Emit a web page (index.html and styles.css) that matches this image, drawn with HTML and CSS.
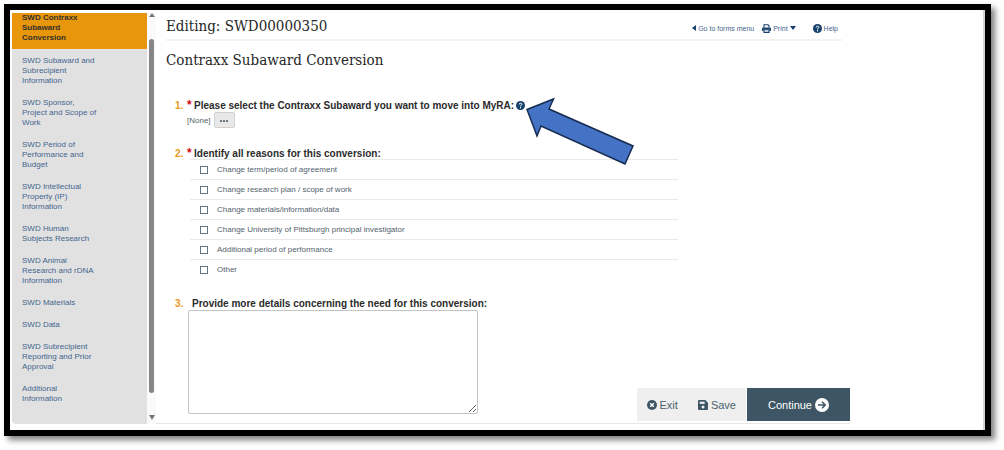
FILE: index.html
```
<!DOCTYPE html>
<html lang="en">
<head>
    <meta charset="utf-8">
    <title>Editing: SWD00000350</title>
    <link rel="stylesheet" href="styles.css">
</head>
<body>
    <div class="frame">
        <nav class="sidebar">
            <a class="active" href="#">SWD Contraxx Subaward Conversion</a>
            <a href="#">SWD Subaward and Subrecipient Information</a>
            <a href="#">SWD Sponsor, Project and Scope of Work</a>
            <a href="#">SWD Period of Performance and Budget</a>
            <a href="#">SWD Intellectual Property (IP) Information</a>
            <a href="#">SWD Human Subjects Research</a>
            <a href="#">SWD Animal Research and rDNA Information</a>
            <a href="#">SWD Materials</a>
            <a href="#">SWD Data</a>
            <a href="#">SWD Subrecipient Reporting and Prior Approval</a>
            <a href="#">Additional Information</a>
        </nav>
        <div class="scrollbar">
            <svg width="6" height="4" viewBox="0 0 6 4"><path d="M0 4L3 0L6 4z" fill="#777"/></svg>
            <div class="thumb"></div>
            <svg width="6" height="5" viewBox="0 0 6 5"><path d="M0 0H6L3 5z" fill="#777"/></svg>
        </div>

        <main class="main">
            <header class="top">
                <h1>Editing: SWD00000350</h1>
                <div class="tools">
                    <a href="#">
                        <svg width="4" height="6" viewBox="0 0 4 6"><path d="M4 0V6L0 3z" fill="#17406d"/></svg>
                        Go to forms menu
                    </a>
                    <a href="#">
                        <svg width="9" height="9" viewBox="0 0 18 18"><path d="M4 7V1.500H12L14 3.500V7" fill="none" stroke="#17406d" stroke-width="2.200"/><path d="M0 9.500Q0 7 2.500 7H15.500Q18 7 18 9.500V14H15V11H3V14H0z" fill="#17406d"/><path d="M4 11.500H14V16.800H4z" fill="#fff" stroke="#17406d" stroke-width="2.200"/></svg>
                        Print
                        <svg width="6" height="4" viewBox="0 0 6 4"><path d="M0 0H6L3 4z" fill="#17406d"/></svg>
                    </a>
                    <a class="help" href="#">
                        <svg width="9" height="9" viewBox="0 0 18 18"><circle cx="9" cy="9" r="9" fill="#17406d"/><path d="M6.300 7Q6.300 4.400 9 4.400Q11.800 4.400 11.800 6.800Q11.800 8.200 9.100 9.300V10.800" fill="none" stroke="#fff" stroke-width="2"/><circle cx="9.100" cy="13.500" r="1.300" fill="#fff"/></svg>
                        Help
                    </a>
                </div>
            </header>

            <h2>Contraxx Subaward Conversion</h2>

            <section class="question">
                <div class="title">
                    <span class="num">1.</span>
                    <span class="star">*</span>
                    <label for="pick">Please select the Contraxx Subaward you want to move into MyRA:</label>
                    <span class="hint">
                        <svg width="9" height="9" viewBox="0 0 18 18"><circle cx="9" cy="9" r="9" fill="#17406d"/><path d="M6.300 7Q6.300 4.400 9 4.400Q11.800 4.400 11.800 6.800Q11.800 8.200 9.100 9.300V10.800" fill="none" stroke="#fff" stroke-width="2"/><circle cx="9.100" cy="13.500" r="1.300" fill="#fff"/></svg>
                        <svg class="arrow" width="110" height="70" viewBox="0 0 110 70"><path d="M2 12.500L28.500 2L24 12L108 49L100 67L16 29L12 39z" fill="#4472c4" stroke="#172c51" stroke-width="1.500"/></svg>
                    </span>
                </div>
                <div class="picker">
                    [None]
                    <button id="pick" type="button">
                        <svg width="8" height="2" viewBox="0 0 8 2"><path d="M0 0H2V2H0zM3 0H5V2H3zM6 0H8V2H6z" fill="#6b7780"/></svg>
                    </button>
                </div>
            </section>

            <section class="question reasons">
                <div class="title">
                    <span class="num">2.</span>
                    <span class="star">*</span>
                    Identify all reasons for this conversion:
                </div>
                <div class="options">
                    <label><input type="checkbox">Change term/period of agreement</label>
                    <label><input type="checkbox">Change research plan / scope of work</label>
                    <label><input type="checkbox">Change materials/information/data</label>
                    <label><input type="checkbox">Change University of Pittsburgh principal investigator</label>
                    <label><input type="checkbox">Additional period of performance</label>
                    <label><input type="checkbox">Other</label>
                </div>
            </section>

            <div class="bottom">
                <section class="question details">
                    <div class="title">
                        <span class="num">3.</span>
                        <label for="details">Provide more details concerning the need for this conversion:</label>
                    </div>
                    <textarea id="details"></textarea>
                </section>
                <div class="actions">
                    <button type="button">
                        <svg width="10" height="10" viewBox="0 0 20 20"><circle cx="10" cy="10" r="10" fill="#3d5564"/><path d="M6.500 6.500L13.500 13.500M13.500 6.500L6.500 13.500" stroke="#fff" stroke-width="3"/></svg>
                        Exit
                    </button>
                    <button type="button">
                        <svg width="10" height="10" viewBox="0 0 18 18"><path d="M2 0H13L18 5V16Q18 18 16 18H2Q0 18 0 16V2Q0 0 2 0z" fill="#3d5564"/><path d="M3 3H12V7H3z" fill="#efefef"/><circle cx="9" cy="12.500" r="2.700" fill="#efefef"/></svg>
                        Save
                    </button>
                    <button class="continue" type="button">
                        Continue
                        <svg width="14" height="14" viewBox="0 0 28 28"><circle cx="14" cy="14" r="14" fill="#fff"/><path d="M6 14H20M14 7.500L20.500 14L14 20.500" fill="none" stroke="#3d5564" stroke-width="3"/></svg>
                    </button>
                </div>
            </div>
        </main>
    </div>
</body>
</html>
```
FILE: styles.css
```
* {
    box-sizing: border-box;
}

body {
    margin: 0;
    padding: 4px 13px 13px 4px;
    background-color: #ffffff;
    font-family: Arial, "Liberation Sans", sans-serif;
    font-size: 8px;
    color: #53636e;
}

svg {
    flex: none;
}

a {
    color: #44658f;
    text-decoration: none;
}

button {
    font-family: inherit;
    border: none;
    cursor: pointer;
}

.frame {
    display: flex;
    border: 6px solid #000000;
    padding: 3px 0 6px 2px;
    box-shadow: 4px 4px 6px rgba(0, 0, 0, 0.5), inset -2px 0 0 #d4d4d4;
}

.sidebar {
    display: flex;
    flex-direction: column;
    gap: 12px;
    width: 135px;
    background-color: #e1e1e1;
    border-bottom-left-radius: 4px;
}

.sidebar a {
    padding: 0 49px 0 10px;
    line-height: 10px;
}

.sidebar .active {
    margin-bottom: -6px;
    padding-bottom: 6px;
    background-color: #e8960c;
    border-bottom: 1px solid #e8e8e8;
    color: #33302a;
    font-weight: bold;
}

.scrollbar {
    display: flex;
    flex-direction: column;
    align-items: center;
    width: 9px;
    padding-bottom: 4px;
    background-color: #fafafa;
}

.thumb {
    flex: 1;
    width: 5px;
    margin: 22px 0;
    border-radius: 3px;
    background-color: #868686;
}

.main {
    flex: 1;
    margin-right: 135px;
    padding: 0 8px 0 10px;
    border-bottom: 1px solid #e6e6e6;
}

.top {
    display: flex;
    justify-content: space-between;
    align-items: center;
    height: 28px;
    border-bottom: 2px solid #f3f3f3;
}

h1,
h2 {
    margin: 0;
    font-family: "Roboto Slab", "DejaVu Serif Condensed", "DejaVu Serif", serif;
    font-size: 15px;
    font-weight: normal;
    line-height: 20px;
    color: #262626;
}

h2 {
    margin-top: 9px;
}

.tools {
    display: flex;
    gap: 8px;
    padding: 4px 4px 0 0;
    font-size: 7px;
}

.tools a {
    display: flex;
    align-items: center;
    gap: 2px;
}

.tools .help {
    margin-left: 9px;
}

.question {
    padding-left: 9px;
}

.title {
    display: flex;
    align-items: center;
    height: 12px;
    font-size: 10px;
    font-weight: bold;
    color: #2b2b2b;
}

.num {
    width: 12px;
    color: #ea9a22;
}

.star {
    width: 7px;
    font-size: 12px;
    color: #d01010;
}

h2 + .question {
    margin-top: 29px;
}

.hint {
    display: flex;
    position: relative;
    margin-left: 2px;
}

/* callout arrow lies over the questions below */
.arrow {
    position: absolute;
    left: 9px;
    top: -4px;
}

.picker {
    display: flex;
    align-items: center;
    gap: 3px;
    padding: 1px 0 0 12px;
}

.picker button {
    width: 21px;
    height: 16px;
    padding: 0;
    border: 1px solid #d0d0d0;
    border-radius: 2px;
    background-color: #e8e8e8;
    line-height: 0;
}

.reasons {
    margin-top: 19px;
}

.options {
    margin: 0 164px 0 15px;
}

.options label {
    display: flex;
    align-items: center;
    gap: 9px;
    height: 20px;
    padding-left: 10px;
    border-top: 1px solid #e9e9e9;
}

.options input {
    appearance: none;
    width: 8px;
    height: 8px;
    margin: 0;
    border: 1px solid #647681;
    background-color: #ffffff;
}

.bottom {
    display: flex;
    justify-content: space-between;
    align-items: flex-end;
    margin: 18px -8px 0 0;
}

.details {
    padding-bottom: 9px;
}

.details .num {
    width: 17px;
}

textarea {
    display: block;
    width: 290px;
    height: 104px;
    margin: 1px 0 0 13px;
    border: 1px solid #c4c4c4;
    border-radius: 2px;
}

.actions {
    display: flex;
    margin-bottom: 2px;
    background-color: #efefef;
}

.actions button {
    display: flex;
    align-items: center;
    gap: 3px;
    height: 33px;
    padding: 0 10px;
    background-color: transparent;
    font-size: 11px;
    color: #4b606d;
}

.actions .continue {
    padding: 0 21px;
    border-left: 1px solid #ffffff;
    background-color: #3d5564;
    color: #ffffff;
}
```
